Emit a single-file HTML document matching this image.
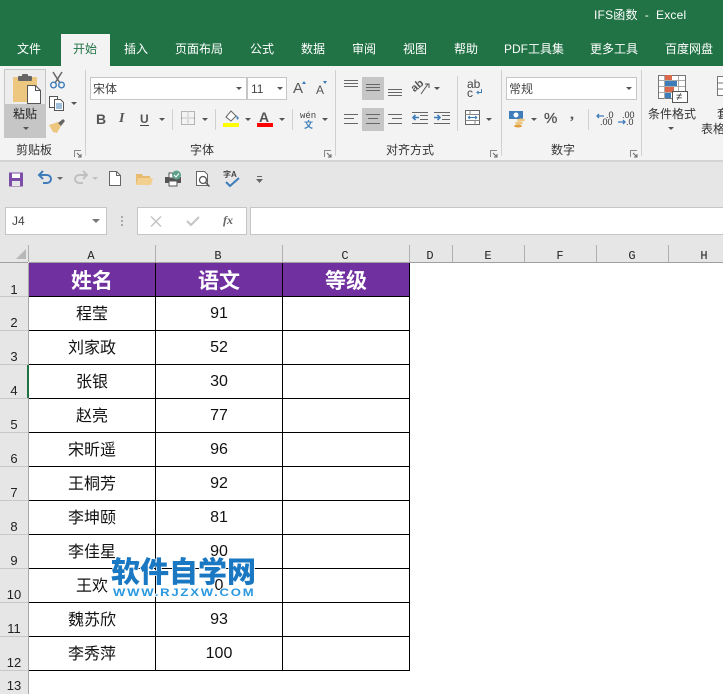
<!DOCTYPE html>
<html lang="zh"><head><meta charset="utf-8"><title>IFS函数 - Excel</title>
<style>
html,body{margin:0;padding:0}
body{width:723px;height:694px;overflow:hidden;position:relative;background:#fff;font-family:"Liberation Sans","Noto Sans CJK SC",sans-serif;color:#333}
div,span,svg{position:absolute;white-space:nowrap}
.tab{top:41px;font-size:12px;line-height:16px;color:#fff;transform:translateX(-50%)}
.sep{width:1px;background:#d0d0d0}
.lab{top:142px;font-size:12px;line-height:16px;color:#333;transform:translateX(-50%)}
.box{background:#fff;border:1px solid #c6c6c6;box-sizing:border-box}
.ch{top:247px;height:17px;font:12px/18px "Liberation Mono",monospace;color:#222;transform:translateX(-50%)}
.cs{top:245px;width:1px;height:17px;background:#b0b0b0}
.rn{left:0;width:28px;text-align:center;font:13px/14px "Liberation Sans",sans-serif;color:#222}
.rs{left:0;width:28px;height:1px;background:#c8c8c8}
.hl{left:29px;width:381px;height:1px;background:#000}
.vl{top:263px;width:1px;height:408px;background:#000}
.c{height:33px;line-height:33px;font-size:16px;color:#111;text-align:center}
.a{left:29px;width:126px;margin-top:1px}.b{left:156px;width:126px}
.h{top:265px;height:33px;line-height:33px;font-size:21px;font-weight:bold;color:#fff;text-align:center;width:126px}
.arr{width:0;height:0;border-left:3px solid transparent;border-right:3px solid transparent;border-top:3px solid #555}
.dec{font:9px/8px "Liberation Sans",sans-serif;color:#333}
</style></head><body>
<div style="left:0;top:0;width:723px;height:66px;background:#217346"></div>
<div style="left:594px;top:7px;font-size:12px;line-height:16px;color:#fff;letter-spacing:.2px">IFS函数 &nbsp;- &nbsp;Excel</div>
<div style="left:61px;top:34px;width:49px;height:32px;background:#f3f3f3"></div>
<div class="tab" style="left:29px">文件</div>
<div class="tab" style="left:85px;color:#217346">开始</div>
<div class="tab" style="left:136px">插入</div>
<div class="tab" style="left:199px">页面布局</div>
<div class="tab" style="left:262px">公式</div>
<div class="tab" style="left:313px">数据</div>
<div class="tab" style="left:364px">审阅</div>
<div class="tab" style="left:415px">视图</div>
<div class="tab" style="left:466px">帮助</div>
<div class="tab" style="left:534px">PDF工具集</div>
<div class="tab" style="left:614px">更多工具</div>
<div class="tab" style="left:689px">百度网盘</div>

<!-- ribbon -->
<div style="left:0;top:66px;width:723px;height:94px;background:#f3f3f3"></div>
<div style="left:0;top:160px;width:723px;height:2px;background:#d4d4d4"></div>
<div class="sep" style="left:85px;top:70px;height:86px"></div>
<div class="sep" style="left:335px;top:70px;height:86px"></div>
<div class="sep" style="left:501px;top:70px;height:86px"></div>
<div class="sep" style="left:641px;top:70px;height:86px"></div>
<div class="sep" style="left:172px;top:109px;height:21px"></div>
<div class="sep" style="left:215px;top:109px;height:21px"></div>
<div class="sep" style="left:292px;top:109px;height:21px"></div>
<div class="sep" style="left:457px;top:76px;height:55px"></div>
<div class="sep" style="left:588px;top:109px;height:21px"></div>

<!-- paste -->
<div style="left:4px;top:69px;width:42px;height:35px;background:#ededed;border:1px solid #c6c6c6;border-bottom:0;box-sizing:border-box"></div>
<div style="left:4px;top:104px;width:42px;height:34px;background:#c6c6c6"></div>
<svg style="left:12px;top:73px" width="30" height="32" viewBox="0 0 30 32"><rect x="1" y="4" width="24" height="25" rx="1" fill="#edc67f"/><rect x="6" y="3" width="14" height="5" rx="1" fill="#666"/><rect x="10" y="1" width="6" height="3" rx="1" fill="#666"/><path d="M15.500 12.500h8l5 5v13h-13z" fill="#fff" stroke="#555"/><path d="M23.500 12.500v5h5" fill="none" stroke="#555"/></svg>
<div style="left:13px;top:106px;font-size:12px;line-height:16px;color:#222">粘贴</div>
<div class="arr" style="left:23px;top:127px"></div>
<svg style="left:49px;top:71px" width="17" height="18" viewBox="0 0 17 18"><path d="M4 1l7 11M13 1L6 12" stroke="#666" stroke-width="1.500" fill="none"/><circle cx="4.500" cy="14" r="2.800" fill="none" stroke="#3f7cba" stroke-width="1.400"/><circle cx="12.500" cy="14" r="2.800" fill="none" stroke="#3f7cba" stroke-width="1.400"/></svg>
<svg style="left:48px;top:95px" width="17" height="16" viewBox="0 0 17 16"><path d="M1.500 1.500h8v11h-8z" fill="#fff" stroke="#555"/><path d="M6.500 4.500h6l3 3v8h-9z" fill="#fff" stroke="#555"/><path d="M8 9h6M8 11h6M8 13h6" stroke="#3f7cba"/></svg>
<div class="arr" style="left:71px;top:102px"></div>
<svg style="left:49px;top:119px" width="17" height="15" viewBox="0 0 17 15"><path d="M0 6l9-3 3 4-4 7-4-1z" fill="#edc67f"/><path d="M9 4l5-4 2 2-4 5z" fill="#666"/></svg>
<div class="lab" style="left:34px">剪贴板</div>
<svg style="left:74px;top:150px" width="8" height="8" viewBox="0 0 8 8"><path d="M.5 7V.5H7" fill="none" stroke="#888"/><path d="M3 3l4 4M7 4v3H4" fill="none" stroke="#666"/></svg>

<!-- font group -->
<div class="box" style="left:90px;top:77px;width:157px;height:23px;border-width:1px"></div>
<div class="box" style="left:247px;top:77px;width:40px;height:23px"></div>
<div style="left:93px;top:81px;font-size:12px;line-height:16px;color:#444">宋体</div>
<div style="left:251px;top:81px;font-size:12px;line-height:16px;color:#444">11</div>
<div class="arr" style="left:236px;top:87px"></div>
<div class="arr" style="left:277px;top:87px"></div>
<div style="left:293px;top:81px;font-size:15px;line-height:16px;color:#555">A</div>
<div style="left:316px;top:83px;font-size:12px;line-height:14px;color:#555">A</div>
<div style="left:302px;top:81px;width:0;height:0;border-left:2.500px solid transparent;border-right:2.500px solid transparent;border-bottom:3px solid #3f7cba"></div>
<div style="left:323px;top:81px;width:0;height:0;border-left:2.500px solid transparent;border-right:2.500px solid transparent;border-top:3px solid #3f7cba"></div>
<div style="left:96px;top:111px;font:bold 14px/16px 'Liberation Sans';color:#555">B</div>
<div style="left:119px;top:111px;font:italic bold 14px/16px 'Liberation Serif';color:#555">I</div>
<div style="left:140px;top:111px;font:bold 12px/16px 'Liberation Sans';color:#555;border-bottom:1px solid #444;height:14px">U</div>
<div class="arr" style="left:159px;top:118px"></div>
<svg style="left:181px;top:111px" width="14" height="14" viewBox="0 0 14 14"><rect x=".5" y=".5" width="13" height="13" fill="none" stroke="#777" stroke-dasharray="1 1"/><path d="M7 .5v13M.5 7h13" stroke="#999" stroke-dasharray="1 1"/></svg>
<div class="arr" style="left:202px;top:118px"></div>
<svg style="left:224px;top:110px" width="16" height="13" viewBox="0 0 16 13"><path d="M2 7l5-6 5 5-5 5z" fill="#fff" stroke="#666"/><path d="M12 5l3 3-2 2z" fill="#3f7cba"/></svg>
<div style="left:223px;top:123px;width:16px;height:4px;background:#ffff00"></div>
<div class="arr" style="left:245px;top:118px"></div>
<div style="left:259px;top:110px;font:bold 14px/14px 'Liberation Sans';color:#555">A</div>
<div style="left:257px;top:123px;width:16px;height:4px;background:#ff0000"></div>
<div class="arr" style="left:279px;top:118px"></div>
<div style="left:300px;top:111px;font:9px/10px 'Liberation Mono';color:#444">wén</div>
<div style="left:304px;top:120px;font-size:9px;line-height:10px;color:#3f7cba;font-weight:bold">文</div>
<div class="arr" style="left:322px;top:118px"></div>
<div class="lab" style="left:202px">字体</div>
<svg style="left:324px;top:150px" width="8" height="8" viewBox="0 0 8 8"><path d="M.5 7V.5H7" fill="none" stroke="#888"/><path d="M3 3l4 4M7 4v3H4" fill="none" stroke="#666"/></svg>

<!-- align group -->
<div style="left:362px;top:77px;width:22px;height:23px;background:#c6c6c6"></div>
<div style="left:362px;top:108px;width:22px;height:23px;background:#c6c6c6"></div>
<svg style="left:340px;top:78px" width="160" height="54" viewBox="0 0 160 54" fill="none" stroke="#666"><path d="M4 2.500h14M4 5.500h14M4 8.500h14"/><path d="M26 6.500h14M26 9.500h14M26 12.500h14"/><path d="M48 11.500h14M48 14.500h14M48 17.500h14"/>
<path d="M4 36.500h14M4 40.500h10M4 45.500h14"/><path d="M26 36.500h14M28 40.500h10M26 45.500h14"/><path d="M48 36.500h14M52 40.500h10M48 45.500h14"/>
<path d="M72 34.500h16M80 37.500h8M80 41.500h8M72 45.500h16"/><path d="M94 34.500h16M102 37.500h8M102 41.500h8M94 45.500h16"/><path d="M79 39.500h-6m2.500-2.500l-2.500 2.500 2.500 2.500" stroke="#3f7cba" stroke-width="1.600"/><path d="M94 39.500h6m-2.500-2.500l2.500 2.500-2.500 2.500" stroke="#3f7cba" stroke-width="1.600"/></svg>
<div style="left:411px;top:80px;font:bold 11px/12px 'Liberation Sans';color:#555;transform:rotate(-40deg)">ab</div>
<svg style="left:420px;top:82px" width="10" height="13" viewBox="0 0 10 13"><path d="M1 12L8 2M5 2h4v4" fill="none" stroke="#555"/></svg>
<div class="arr" style="left:434px;top:87px"></div>
<div style="left:467px;top:80px;font:12px/9px 'Liberation Sans';color:#444;white-space:pre">ab
c</div>
<svg style="left:475px;top:89px" width="8" height="7" viewBox="0 0 8 7"><path d="M6.500 0v3.500H2M3.500 2L2 3.500 3.500 5" fill="none" stroke="#3f7cba"/></svg>
<svg style="left:465px;top:110px" width="16" height="16" viewBox="0 0 16 16"><rect x=".5" y=".5" width="14" height="14" fill="#fff" stroke="#666"/><path d="M.5 4.500h14M.5 10.500h14M5 .5v4M10 10.500v4" stroke="#888"/><path d="M3 7.500h9M3 7.500l2-1.500M3 7.500l2 1.500M12 7.500l-2-1.500M12 7.500l-2 1.500" stroke="#3f7cba"/></svg>
<div class="arr" style="left:486px;top:118px"></div>
<div class="lab" style="left:410px">对齐方式</div>
<svg style="left:490px;top:150px" width="8" height="8" viewBox="0 0 8 8"><path d="M.5 7V.5H7" fill="none" stroke="#888"/><path d="M3 3l4 4M7 4v3H4" fill="none" stroke="#666"/></svg>

<!-- number group -->
<div class="box" style="left:506px;top:77px;width:131px;height:23px"></div>
<div style="left:509px;top:81px;font-size:12px;line-height:16px;color:#444">常规</div>
<div class="arr" style="left:626px;top:87px"></div>
<svg style="left:508px;top:110px" width="20" height="18" viewBox="0 0 20 18"><rect x="1" y="1" width="14" height="8" fill="#3f7cba"/><circle cx="8" cy="5" r="2.500" fill="#fff"/><ellipse cx="13" cy="10" rx="4" ry="1.500" fill="#edc67f"/><ellipse cx="11" cy="13" rx="4" ry="1.500" fill="#edc67f"/><ellipse cx="10" cy="16" rx="4" ry="1.500" fill="#e0a040"/></svg>
<div class="arr" style="left:531px;top:118px"></div>
<div style="left:544px;top:111px;font:15px/16px 'Liberation Sans';color:#555;-webkit-text-stroke:.3px #555">%</div>
<div style="left:570px;top:107px;font:bold 16px/16px 'Liberation Serif';color:#555">,</div>
<div class="dec" style="left:606px;top:111px">.0</div>
<div class="dec" style="left:600px;top:118px">.00</div>
<div class="dec" style="left:622px;top:111px">.00</div>
<div class="dec" style="left:626px;top:118px">.0</div>
<svg style="left:595px;top:112px" width="10" height="8" viewBox="0 0 10 8"><path d="M9 4H2M4 2L2 4l2 2" fill="none" stroke="#3f7cba" stroke-width="1.300"/></svg>
<svg style="left:617px;top:118px" width="10" height="8" viewBox="0 0 10 8"><path d="M1 4h7M6 2l2 2-2 2" fill="none" stroke="#3f7cba" stroke-width="1.300"/></svg>
<div class="lab" style="left:563px">数字</div>
<svg style="left:630px;top:150px" width="8" height="8" viewBox="0 0 8 8"><path d="M.5 7V.5H7" fill="none" stroke="#888"/><path d="M3 3l4 4M7 4v3H4" fill="none" stroke="#666"/></svg>

<!-- cond format -->
<svg style="left:657px;top:73px" width="34" height="32" viewBox="0 0 34 32"><rect x="1.500" y="2.500" width="27" height="23" fill="#fff" stroke="#777"/><rect x="8" y="2" width="7" height="5" fill="#d9694a"/><rect x="8" y="8" width="12" height="5" fill="#3f7cba"/><rect x="8" y="14" width="9" height="5" fill="#d9694a"/><rect x="8" y="20" width="6" height="5" fill="#3f7cba"/><path d="M7.500 3v23M21.500 3v23M2 7.500h26M2 13.500h26M2 19.500h26" stroke="#aaa"/><rect x="15.500" y="18.500" width="15" height="11" fill="#fff" stroke="#555"/></svg>
<div style="left:676px;top:90px;font:11px/14px 'Liberation Sans';color:#333">≠</div>
<div style="left:648px;top:106px;font-size:12px;line-height:16px;color:#333">条件格式</div>
<div class="arr" style="left:668px;top:127px"></div>
<svg style="left:717px;top:76px" width="6" height="20" viewBox="0 0 6 20"><path d="M6 .5H.5v19H6M0 7h6M0 13h6" fill="#fff" stroke="#777"/></svg>
<div style="left:717px;top:106px;font-size:12px;line-height:16px;color:#333">套</div>
<div style="left:701px;top:121px;font-size:12px;line-height:16px;color:#333">表格</div>

<!-- QAT + formula band -->
<div style="left:0;top:162px;width:723px;height:83px;background:#e6e6e6"></div>
<svg style="left:9px;top:172px" width="15" height="15" viewBox="0 0 15 15"><rect width="14" height="14" y=".5" fill="#7d4ea8"/><rect x="3" y="1.500" width="8" height="4.500" fill="#fff"/><rect x="3" y="9" width="8" height="5" fill="#e6e6e6"/></svg>
<svg style="left:37px;top:170px" width="17" height="16" viewBox="0 0 17 16"><path d="M3 5h7a4 4 0 0 1 0 8H6M6 1L2 5l4 4" fill="none" stroke="#3f7cba" stroke-width="2"/></svg>
<div class="arr" style="left:57px;top:177px;border-top-color:#666"></div>
<svg style="left:72px;top:170px" width="17" height="16" viewBox="0 0 17 16"><path d="M14 5H7a4 4 0 0 0 0 8h4M11 1l4 4-4 4" fill="none" stroke="#c0c0c0" stroke-width="2"/></svg>
<div class="arr" style="left:92px;top:177px;border-top-color:#c0c0c0"></div>
<svg style="left:109px;top:171px" width="12" height="15" viewBox="0 0 12 15"><path d="M.5.500h7l4 4v10H.5z" fill="#fff" stroke="#666"/><path d="M7.500.5v4h4" fill="none" stroke="#666"/></svg>
<svg style="left:136px;top:172px" width="17" height="13" viewBox="0 0 17 13"><path d="M0 2h6l1 2h7v9H0z" fill="#e8bc70"/><path d="M2 6h15l-2 7H0z" fill="#f3d08f"/></svg>
<svg style="left:165px;top:170px" width="17" height="17" viewBox="0 0 17 17"><rect x="0" y="7" width="16" height="6" fill="#555"/><rect x="4" y="3" width="7" height="5" fill="#fff" stroke="#555"/><rect x="4" y="11" width="8" height="5" fill="#fff" stroke="#555"/><circle cx="11.500" cy="5" r="4.500" fill="#5fa08c"/><path d="M9 5l2 2 3-3.500" stroke="#fff" fill="none"/></svg>
<svg style="left:196px;top:171px" width="15" height="16" viewBox="0 0 15 16"><path d="M.5.500h8l3 3v11H.5z" fill="#fff" stroke="#666"/><circle cx="7" cy="9" r="3.500" fill="#fff" stroke="#555" stroke-width="1.300"/><path d="M9.500 11.500l4 4" stroke="#555" stroke-width="1.500"/></svg>
<div style="left:223px;top:170px;font-size:8px;line-height:10px;color:#444;font-weight:bold">字A</div>
<svg style="left:225px;top:177px" width="16" height="11" viewBox="0 0 16 11"><path d="M1 5l4 4 9-8" fill="none" stroke="#3f7cba" stroke-width="2"/></svg>
<svg style="left:256px;top:176px" width="7" height="7" viewBox="0 0 7 7"><path d="M1 .5h5" stroke="#666"/><path d="M0 3h7L3.500 7z" fill="#666"/></svg>

<div class="box" style="left:5px;top:207px;width:102px;height:28px"></div>
<div style="left:12px;top:214px;font-size:12px;line-height:15px;color:#444">J4</div>
<div class="arr" style="left:92px;top:219px;border-left-width:4px;border-right-width:4px;border-top:4px solid #777"></div>
<div style="left:121px;top:216px;width:2px;height:10px;background-image:repeating-linear-gradient(#aaa 0 2px,transparent 2px 4px)"></div>
<div class="box" style="left:137px;top:207px;width:110px;height:28px"></div>
<svg style="left:150px;top:216px" width="12" height="11" viewBox="0 0 12 11"><path d="M1 .5l10 10M11 .5l-10 10" stroke="#c4c4c4" stroke-width="1.500"/></svg>
<svg style="left:186px;top:216px" width="14" height="11" viewBox="0 0 14 11"><path d="M1 5l4 4 8-8" fill="none" stroke="#c4c4c4" stroke-width="2"/></svg>
<div style="left:223px;top:213px;font:italic bold 12px/15px 'Liberation Serif';color:#666">fx</div>
<div class="box" style="left:250px;top:207px;width:473px;height:28px;border-right:0"></div>

<!-- column header -->
<div style="left:0;top:245px;width:723px;height:17px;background:#e6e6e6"></div>
<div style="left:29px;top:262px;width:694px;height:1px;background:#a0a0a0"></div>
<div style="left:0;top:262px;width:28px;height:1px;background:#a0a0a0"></div>
<div style="left:16px;top:249px;width:0;height:0;border-left:10px solid transparent;border-bottom:10px solid #b8b8b8"></div>
<div class="cs" style="left:28px"></div><div class="cs" style="left:155px"></div><div class="cs" style="left:282px"></div><div class="cs" style="left:409px"></div><div class="cs" style="left:452px"></div><div class="cs" style="left:524px"></div><div class="cs" style="left:596px"></div><div class="cs" style="left:668px"></div>
<div class="ch" style="left:91px">A</div><div class="ch" style="left:218px">B</div><div class="ch" style="left:345px">C</div><div class="ch" style="left:430px">D</div><div class="ch" style="left:488px">E</div><div class="ch" style="left:560px">F</div><div class="ch" style="left:632px">G</div><div class="ch" style="left:704px">H</div>

<!-- row header -->
<div style="left:0;top:263px;width:28px;height:431px;background:#e6e6e6"></div>
<div style="left:28px;top:263px;width:1px;height:431px;background:#a8a8a8"></div>
<div class="rs" style="top:296px"></div><div class="rs" style="top:330px"></div><div class="rs" style="top:364px"></div><div class="rs" style="top:398px"></div><div class="rs" style="top:432px"></div><div class="rs" style="top:466px"></div><div class="rs" style="top:500px"></div><div class="rs" style="top:534px"></div><div class="rs" style="top:568px"></div><div class="rs" style="top:602px"></div><div class="rs" style="top:636px"></div><div class="rs" style="top:670px"></div>
<div style="left:27px;top:365px;width:2px;height:33px;background:#217346"></div>
<div class="rn" style="top:283px">1</div><div class="rn" style="top:316px">2</div><div class="rn" style="top:350px">3</div><div class="rn" style="top:384px">4</div><div class="rn" style="top:418px">5</div><div class="rn" style="top:452px">6</div><div class="rn" style="top:486px">7</div><div class="rn" style="top:520px">8</div><div class="rn" style="top:554px">9</div><div class="rn" style="top:588px">10</div><div class="rn" style="top:622px">11</div><div class="rn" style="top:656px">12</div><div class="rn" style="top:679px">13</div>

<!-- table -->
<div style="left:29px;top:263px;width:380px;height:33px;background:#7030a0"></div>
<div class="h" style="left:29px">姓名</div><div class="h" style="left:156px">语文</div><div class="h" style="left:283px">等级</div>
<div class="c a" style="top:297px">程莹</div><div class="c b" style="top:297px">91</div>
<div class="c a" style="top:331px">刘家政</div><div class="c b" style="top:331px">52</div>
<div class="c a" style="top:365px">张银</div><div class="c b" style="top:365px">30</div>
<div class="c a" style="top:399px">赵亮</div><div class="c b" style="top:399px">77</div>
<div class="c a" style="top:433px">宋昕遥</div><div class="c b" style="top:433px">96</div>
<div class="c a" style="top:467px">王桐芳</div><div class="c b" style="top:467px">92</div>
<div class="c a" style="top:501px">李坤颐</div><div class="c b" style="top:501px">81</div>
<div class="c a" style="top:535px">李佳星</div><div class="c b" style="top:535px">90</div>
<div class="c a" style="top:569px">王欢</div><div class="c b" style="top:569px">0</div>
<div class="c a" style="top:603px">魏苏欣</div><div class="c b" style="top:603px">93</div>
<div class="c a" style="top:637px">李秀萍</div><div class="c b" style="top:637px">100</div>
<div class="hl" style="top:296px"></div><div class="hl" style="top:330px"></div><div class="hl" style="top:364px"></div><div class="hl" style="top:398px"></div><div class="hl" style="top:432px"></div><div class="hl" style="top:466px"></div><div class="hl" style="top:500px"></div><div class="hl" style="top:534px"></div><div class="hl" style="top:568px"></div><div class="hl" style="top:602px"></div><div class="hl" style="top:636px"></div><div class="hl" style="top:670px"></div>
<div class="vl" style="left:155px"></div><div class="vl" style="left:282px"></div><div class="vl" style="left:409px"></div>

<!-- watermark -->
<div style="left:111px;top:555px;font-size:29px;line-height:36px;font-weight:900;color:#1a78c2;-webkit-text-stroke:1.500px #fff;paint-order:stroke fill">软件自学网</div>
<div style="left:113px;top:585px;font-size:11px;line-height:16px;font-weight:bold;color:#2a98e0;letter-spacing:1.500px;transform:scaleX(1.190);transform-origin:left center;-webkit-text-stroke:1.500px #fff;paint-order:stroke fill">WWW.RJZXW.COM</div>
</body></html>
